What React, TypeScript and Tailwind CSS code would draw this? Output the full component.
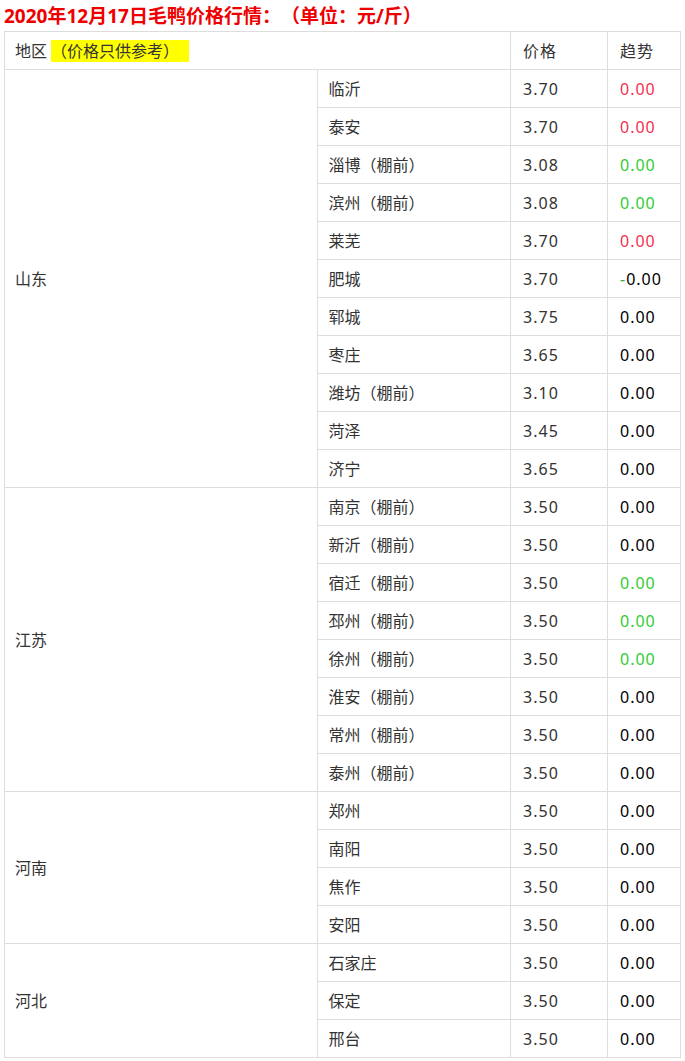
type Trend = "red" | "green" | "neg" | "plain"

type Row = { city: string; price: string; trend: Trend }

type Region = { name: string; rows: Row[] }

const regions: Region[] = [
  {
    name: "山东",
    rows: [
      { city: "临沂", price: "3.70", trend: "red" },
      { city: "泰安", price: "3.70", trend: "red" },
      { city: "淄博（棚前）", price: "3.08", trend: "green" },
      { city: "滨州（棚前）", price: "3.08", trend: "green" },
      { city: "莱芜", price: "3.70", trend: "red" },
      { city: "肥城", price: "3.70", trend: "neg" },
      { city: "郓城", price: "3.75", trend: "plain" },
      { city: "枣庄", price: "3.65", trend: "plain" },
      { city: "潍坊（棚前）", price: "3.10", trend: "plain" },
      { city: "菏泽", price: "3.45", trend: "plain" },
      { city: "济宁", price: "3.65", trend: "plain" },
    ],
  },
  {
    name: "江苏",
    rows: [
      { city: "南京（棚前）", price: "3.50", trend: "plain" },
      { city: "新沂（棚前）", price: "3.50", trend: "plain" },
      { city: "宿迁（棚前）", price: "3.50", trend: "green" },
      { city: "邳州（棚前）", price: "3.50", trend: "green" },
      { city: "徐州（棚前）", price: "3.50", trend: "green" },
      { city: "淮安（棚前）", price: "3.50", trend: "plain" },
      { city: "常州（棚前）", price: "3.50", trend: "plain" },
      { city: "泰州（棚前）", price: "3.50", trend: "plain" },
    ],
  },
  {
    name: "河南",
    rows: [
      { city: "郑州", price: "3.50", trend: "plain" },
      { city: "南阳", price: "3.50", trend: "plain" },
      { city: "焦作", price: "3.50", trend: "plain" },
      { city: "安阳", price: "3.50", trend: "plain" },
    ],
  },
  {
    name: "河北",
    rows: [
      { city: "石家庄", price: "3.50", trend: "plain" },
      { city: "保定", price: "3.50", trend: "plain" },
      { city: "邢台", price: "3.50", trend: "plain" },
    ],
  },
]

function TrendCell({ trend }: { trend: Trend }) {
  if (trend === "red") return <span className="text-[#f0324f]">0.00</span>
  if (trend === "green") return <span className="text-[#33cc33]">0.00</span>
  if (trend === "neg")
    return (
      <span className="text-black">
        <span className="text-[#33aa33]">-</span>0.00
      </span>
    )
  return <span className="text-black">0.00</span>
}

const cell = "border border-[#dddddd] h-[38px] px-[10px] align-middle text-left font-normal"
const numCell = "border border-[#dddddd] h-[38px] pl-[12px] pr-[8px] align-middle text-left font-normal tracking-[1px]"

export default function App() {
  return (
    <div className="w-[685px] bg-white font-['Noto_Sans','Noto_Sans_CJK_SC',sans-serif] text-[16px] text-[#333333] [text-spacing-trim:space-all]">
      {/* Title */}
      <h1 className="h-[31px] pl-[4px] pt-[4px] text-[19px] leading-[24px] font-bold text-[#ee0000]">
        2020年12月17日毛鸭价格行情：（单位：元/斤）
      </h1>

      <table className="ml-[4px] w-[677px] border-collapse">
        <colgroup>
          <col className="w-[314px]" />
          <col className="w-[193px]" />
          <col className="w-[97px]" />
          <col className="w-[73px]" />
        </colgroup>
        <thead>
          <tr>
            <th colSpan={2} className={cell}>
              地区<span className="bg-[#ffff00] ml-[4px] pr-[10px]">（价格只供参考）</span>
            </th>
            <th className={numCell}>价格</th>
            <th className={numCell}>趋势</th>
          </tr>
        </thead>
        <tbody>
          {regions.map((region) =>
            region.rows.map((row, i) => (
              <tr key={region.name + row.city}>
                {i === 0 && (
                  <td rowSpan={region.rows.length} className={cell}>
                    {region.name}
                  </td>
                )}
                <td className={cell}>{row.city}</td>
                <td className={numCell}>{row.price}</td>
                <td className={numCell}>
                  <TrendCell trend={row.trend} />
                </td>
              </tr>
            ))
          )}
        </tbody>
      </table>
    </div>
  )
}
